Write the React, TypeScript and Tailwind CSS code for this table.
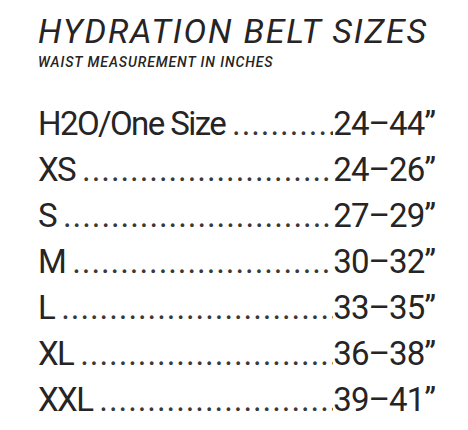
import React from "react";

const rows: [string, string][] = [
  ["H2O/One Size", "24–44”"],
  ["XS", "24–26”"],
  ["S", "27–29”"],
  ["M", "30–32”"],
  ["L", "33–35”"],
  ["XL", "36–38”"],
  ["XXL", "39–41”"],
];

const DOTS = ".".repeat(60);

export default function App() {
  return (
    <div
      className="w-[468px] h-[430px] bg-white text-[#262424] pl-[38px] pt-[11px]"
      style={{ fontFamily: "Roboto, 'DejaVu Sans', sans-serif" }}
    >
      <h1 className="text-[34px] leading-[40px] italic font-normal tracking-[1.8px] whitespace-nowrap">
        HYDRATION BELT SIZES
      </h1>
      <p className="text-[14px] leading-[16px] italic font-medium tracking-[0.9px] mt-[3px] whitespace-nowrap">
        WAIST MEASUREMENT IN INCHES
      </p>
      <div className="mt-[31px] w-[397px] flex flex-col">
        {rows.map(([label, value]) => (
          <div key={label} className="flex items-baseline text-[33px] leading-[46px] font-normal">
            <span className="whitespace-nowrap tracking-[-1.6px]">{label}</span>
            <span className="w-[7px] shrink-0" />
            <span className="flex-1 min-w-0 overflow-hidden whitespace-nowrap tracking-[0.9px] text-[#3a3838]">
              {DOTS}
            </span>
            <span className="whitespace-nowrap tracking-[-1px]">{value}</span>
          </div>
        ))}
      </div>
    </div>
  );
}
